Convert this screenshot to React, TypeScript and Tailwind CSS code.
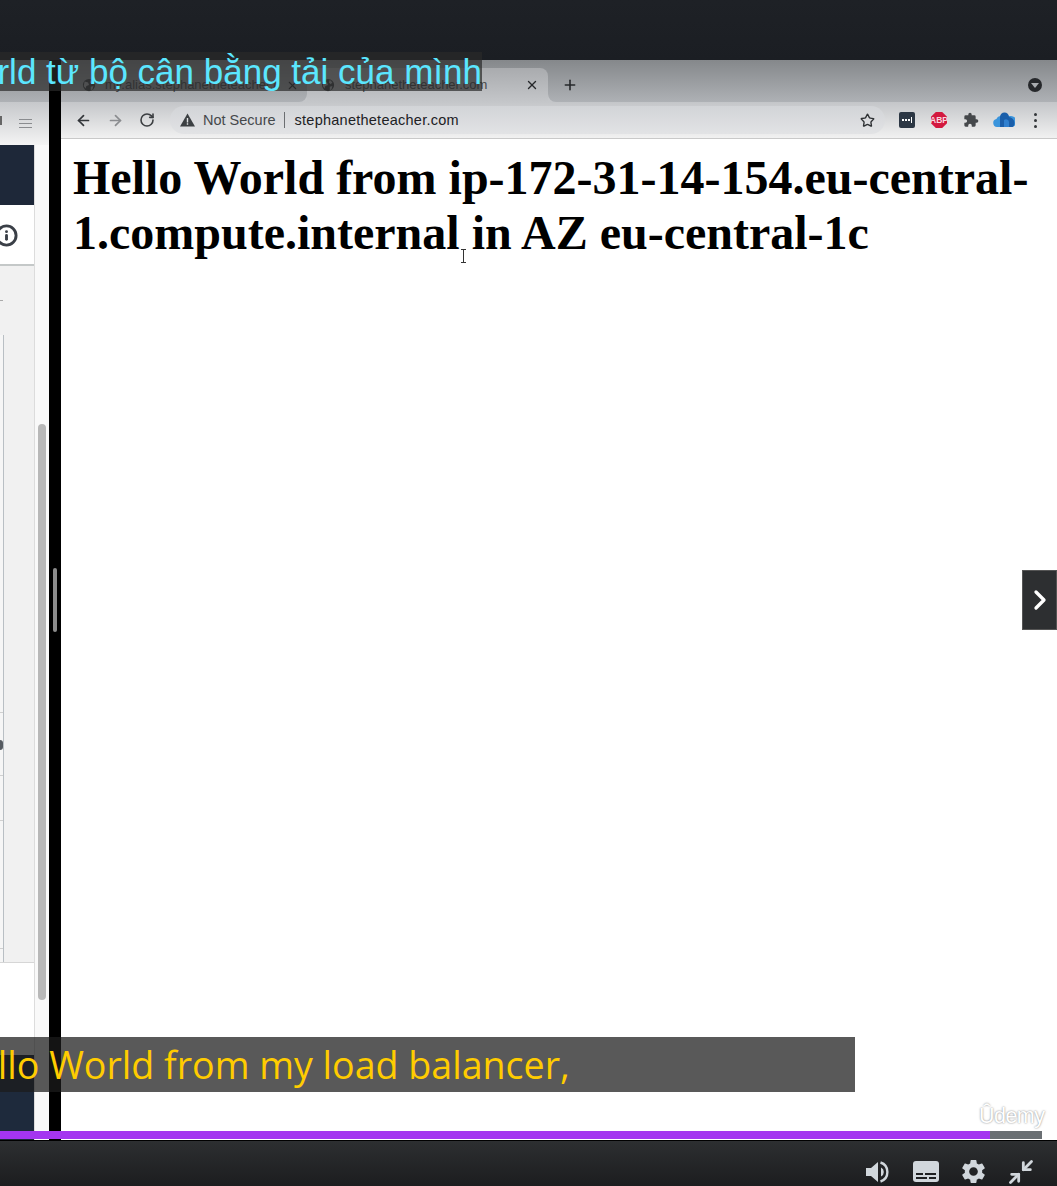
import { ArrowLeft, ArrowRight, ChevronRight, Info, Minimize2, Plus, RotateCw, Star, X } from 'lucide-react'
import { MdSettings } from 'react-icons/md'

function Globe({ className }: { className: string }) {
  return (
    <svg viewBox="0 0 16 16" className={className} aria-hidden="true">
      <circle cx="8" cy="8" r="7" fill="#3c4043" />
      <path d="M3 4l4 1 1 3-3 1-1 3-2-3zM10 2l3 3-2 2-2-2zM10 10l3-1-1 4-2 1z" fill="#a9acaf" />
    </svg>
  )
}

function BrowserChrome() {
  return (
    <div className="h-[79px] shrink-0 border-b border-[#c9c9c9]">
      {/* Tabs */}
      <div className="flex h-[42px] bg-[#c4c6c9]">
        <div className="flex w-[246px] items-center rounded-br-lg bg-gradient-to-b from-[#85888b] to-[#aeb1b5] pl-[21px] pr-[8px] pt-[8px]">
          <Globe className="size-[14px] shrink-0" />
          <span className="ml-[9px] flex-1 overflow-hidden whitespace-nowrap font-['Liberation_Sans',sans-serif] text-[13px] text-[#45484b]">
            my.alias.stephanetheteacher.com
          </span>
          <X className="ml-[6px] size-[13px] shrink-0 text-[#2a2c2f]" strokeWidth={2} />
        </div>
        <div className="w-[241px] bg-gradient-to-b from-[#85888b] to-[#aeb1b5] pt-[8px]">
          <div className="flex h-[34px] items-center rounded-t-lg bg-gradient-to-b from-[#a9abae] to-[#c4c6c9] pl-[14px] pr-[9px]">
            <Globe className="size-[14px] shrink-0" />
            <span className="ml-[10px] flex-1 whitespace-nowrap font-['Liberation_Sans',sans-serif] text-[13px] text-[#45484b]">
              stephanetheteacher.com
            </span>
            <X className="size-[14px] text-[#26282b]" strokeWidth={2.4} />
          </div>
        </div>
        <div className="flex flex-1 items-center rounded-bl-lg bg-gradient-to-b from-[#85888b] to-[#aeb1b5] pt-[8px]">
          <Plus className="ml-[14px] size-[16px] text-[#26282b]" strokeWidth={2.4} />
          <div className="ml-auto mr-[15px] flex size-[14px] items-center justify-center rounded-full bg-[#26282b]">
            <div className="border-x-[4px] border-t-[5px] border-x-transparent border-t-[#a9acaf]" />
          </div>
        </div>
      </div>
      {/* Toolbar */}
      <div className="flex h-[36px] items-center bg-gradient-to-b from-[#c4c6c9] to-[#f1f1f1]">
        <ArrowLeft className="ml-[14px] size-[17px] text-[#33363a]" strokeWidth={2.4} />
        <ArrowRight className="ml-[15px] size-[17px] text-[#8a8c8f]" strokeWidth={2.4} />
        <RotateCw className="ml-[15px] size-[16px] text-[#3b3e41]" strokeWidth={2.4} />
        <div className="ml-[15px] flex h-[28px] w-[715px] items-center rounded-full bg-gradient-to-b from-[#d2d4d7] to-[#e2e3e5] px-[10px] font-['Liberation_Sans',sans-serif] text-[14.5px]">
          <svg viewBox="0 0 15 14" className="h-[14px] w-[15px]" aria-hidden="true">
            <path d="M7.500 0.500 15 13.500H0z" fill="#3c4043" />
            <path d="M6.800 5h1.400v4.500H6.800zM6.800 10.300h1.400v1.400H6.800z" fill="#e0e1e3" />
          </svg>
          <span className="ml-[8px] pt-[2px] text-[#45484b]">Not Secure</span>
          <span className="ml-[8px] mr-[10px] h-[16px] w-px bg-[#6b6e71]" />
          <span className="pt-[2px] tracking-[0.25px] text-[#202124]">stephanetheteacher.com</span>
          <Star className="ml-auto size-[15px] text-[#2e3134]" strokeWidth={2.2} />
        </div>
        <div className="ml-[14px] flex h-[16px] w-[16px] items-center justify-center gap-[1px] rounded-[2px] bg-[#2c3744]">
          <span className="size-[2px] bg-white" />
          <span className="size-[2px] bg-white" />
          <span className="size-[2px] bg-white" />
          <span className="h-[6px] w-px bg-white" />
        </div>
        <div className="ml-[16px] flex size-[16px] items-center justify-center bg-[#d3193f] font-['Liberation_Sans',sans-serif] text-[8.5px] font-bold leading-none text-[#f8d5dd] [clip-path:polygon(30%_0,70%_0,100%_30%,100%_70%,70%_100%,30%_100%,0_70%,0_30%)]">
          ABP
        </div>
        <svg viewBox="0 0 24 24" className="ml-[16px] size-[16px]" aria-hidden="true">
          <path fill="#45484b" d="M20.500 11H19V7a2 2 0 0 0-2-2h-4V3.500a2.500 2.500 0 0 0-5 0V5H4a2 2 0 0 0-2 2v3.800h1.500a2.700 2.700 0 0 1 0 5.400H2V20a2 2 0 0 0 2 2h3.800v-1.500a2.700 2.700 0 0 1 5.400 0V22H17a2 2 0 0 0 2-2v-4h1.500a2.500 2.500 0 0 0 0-5z" />
        </svg>
        <svg viewBox="0 0 22 16" className="ml-[14px] h-[16px] w-[22px]" aria-hidden="true">
          <path fill="#3a94dc" d="M4 15a4 4 0 0 1-.6-7.900A5 5 0 0 1 8 4h10a4 4 0 0 1 0 11z" />
          <path fill="#1a5eaa" d="M7 15V5a4.500 4.500 0 0 1 9 0c3 .5 5.500 3 5.500 6 0 1.500-.5 3-2 4z" />
          <path fill="#2f7fcf" d="M11 15V8a3 3 0 0 1 5 2v5z" />
        </svg>
        <div className="ml-[19px] flex flex-col gap-[3px]">
          <span className="size-[3px] rounded-full bg-[#33363a]" />
          <span className="size-[3px] rounded-full bg-[#33363a]" />
          <span className="size-[3px] rounded-full bg-[#33363a]" />
        </div>
      </div>
    </div>
  )
}

function SidePanel() {
  return (
    <div className="flex w-[49px] shrink-0 flex-col">
      <div className="h-[42px] shrink-0 bg-gradient-to-b from-[#85888b] to-[#aeb1b5]" />
      <div className="flex h-[43px] shrink-0 items-center justify-between bg-gradient-to-b from-[#c6c8cb] to-[#f4f4f4] pr-[17px]">
        <span className="mb-[7px] h-[9px] w-[2px] bg-[#666]" />
        <div className="flex w-[13px] flex-col gap-[3px]">
          <span className="h-px bg-[#8a8c8f]" />
          <span className="h-px bg-[#8a8c8f]" />
          <span className="h-px bg-[#8a8c8f]" />
        </div>
      </div>
      <div className="flex min-h-0 flex-1">
        <div className="flex w-[35px] flex-col border-r border-[#dcdcdc]">
          <div className="h-[60px] shrink-0 bg-[#1e2839]" />
          <div className="flex h-[61px] shrink-0 items-center justify-end overflow-hidden border-b-2 border-[#c4c8c8] bg-white pr-[16px] pt-[2px]">
            <Info className="size-[23px] shrink-0 text-[#3a3f47]" strokeWidth={3} />
          </div>
          {/* Clipped table behind the sidebar */}
          <div className="h-[69px] shrink-0 bg-[#f1f1f1] pt-[34px]">
            <div className="h-px w-[3px] bg-[#aaaaaa]" />
          </div>
          <div className="flex min-h-0 flex-1 bg-[#f1f1f1]">
            <div className="flex w-[4px] flex-col border-r border-[#b9bfc4] bg-[#f6f6f6]">
              <span className="mt-[377px] h-px bg-[#d0d0d0]" />
              <span className="mt-[27px] h-[10px] w-[3px] rounded-r bg-[#555a60]" />
              <span className="mt-[25px] h-px bg-[#d0d0d0]" />
              <span className="mt-[44px] h-px bg-[#d0d0d0]" />
              <span className="mt-[127px] h-px bg-[#d0d0d0]" />
            </div>
          </div>
          <div className="h-[93px] shrink-0 border-t border-[#d6d6d6] bg-white" />
          <div className="h-[85px] shrink-0 bg-[#1e2a3c]" />
        </div>
        <div className="flex-1 bg-[#f9f9f9] px-[3px] pt-[279px]">
          <div className="h-[576px] rounded-full bg-[#b8b8b8]" />
        </div>
      </div>
    </div>
  )
}

export default function App() {
  return (
    <div className="relative flex h-[1186px] w-[1057px] flex-col overflow-hidden bg-white">
      <div className="h-[60px] shrink-0 bg-gradient-to-b from-[#1e2126] to-[#1b1e23]" />

      <div className="flex min-h-0 flex-1">
        <SidePanel />
        {/* Divider */}
        <div className="flex w-[12px] shrink-0 items-start justify-center bg-black pt-[508px]">
          <div className="h-[64px] w-[4px] rounded-full bg-[#8c8c8c]" />
        </div>
        <div className="flex min-w-0 flex-1 flex-col">
          <BrowserChrome />
          <main className="relative flex-1 bg-white pl-[12px] pr-[20px] pt-[11px]">
            <h1 className="font-['Liberation_Serif',serif] text-[48px] font-bold leading-[55px] text-black">
              Hello World from ip-172-31-14-154.eu-central-1.compute.internal in AZ eu-central-1c
            </h1>
            {/* I-beam cursor */}
            <div className="absolute left-[400px] top-[110px] flex h-[14px] w-[5px] flex-col justify-between">
              <span className="h-px bg-[#333]" />
              <span className="mx-auto h-full w-px bg-[#333]" />
              <span className="h-px bg-[#333]" />
            </div>
          </main>
        </div>
      </div>

      {/* Player controls */}
      <div className="flex h-[46px] shrink-0 items-center justify-end border-t border-black bg-gradient-to-b from-[#2d2f31] to-[#1c1d1f] pr-[22px] pt-[16px] text-[#d1d7dc]">
        <svg viewBox="0 0 24 24" className="size-[24px]" aria-hidden="true">
          <path fill="#d1d7dc" d="M0 8h5l7-6v20l-7-6H0z" />
          <path fill="#d1d7dc" d="M15 7.500a5 5 0 0 1 0 9z" />
          <path fill="none" stroke="#d1d7dc" strokeWidth="2.4" d="M14.500 2.500a10 10 0 0 1 0 19" />
        </svg>
        <div className="ml-[23px] flex h-[21px] w-[26px] flex-col justify-end gap-[2px] rounded-[3px] bg-[#d1d7dc] p-[3px]">
          <div className="flex gap-[2px]">
            <span className="h-[2px] w-[7px] bg-[#1f2022]" />
            <span className="h-[2px] flex-1 bg-[#1f2022]" />
          </div>
          <div className="flex gap-[2px]">
            <span className="h-[2px] flex-1 bg-[#1f2022]" />
            <span className="h-[2px] w-[7px] bg-[#1f2022]" />
          </div>
        </div>
        <MdSettings className="ml-[20px] size-[29px] text-[#d1d7dc]" />
        <Minimize2 className="ml-[19px] size-[28px]" strokeWidth={2.4} />
      </div>

      {/* Progress bar */}
      <div className="absolute left-0 top-[1131px] flex h-[8px]">
        <div className="w-[990px] bg-[#a435f0]" />
        <div className="w-[52px] bg-[#6a6f73]" />
      </div>

      {/* Next lecture arrow */}
      <div className="absolute left-[1022px] top-[570px] flex h-[60px] w-[35px] items-center justify-center border border-[#555] bg-[#2d2f31]">
        <ChevronRight className="size-[32px] text-white" strokeWidth={2.5} />
      </div>

      {/* Udemy watermark */}
      <div className="absolute left-[979px] top-[1102px] font-['Liberation_Sans',sans-serif] text-[21.5px] leading-[28px] tracking-tight text-white [text-shadow:0_0_2px_#777]">
        Ûdemy
      </div>

      {/* Translated caption */}
      <div className="absolute left-0 top-[52px] flex h-[39px] w-[482px] items-center justify-end overflow-hidden bg-[#2a2a2a]/70">
        <span className="shrink-0 whitespace-nowrap font-['Liberation_Sans',sans-serif] text-[35px] leading-[39px] text-[#5be6ff]">
          Hello World từ bộ cân bằng tải của mình
        </span>
      </div>

      {/* Original caption */}
      <div className="absolute left-0 top-[1037px] flex h-[55px] w-[855px] items-center overflow-hidden bg-[#1b1b1b]/73">
        <span className="ml-[-51px] shrink-0 whitespace-nowrap font-['Open_Sans',sans-serif] text-[37.6px] leading-[55px] text-[#ffcc00]">
          Hello World from my load balancer,
        </span>
      </div>
    </div>
  )
}
